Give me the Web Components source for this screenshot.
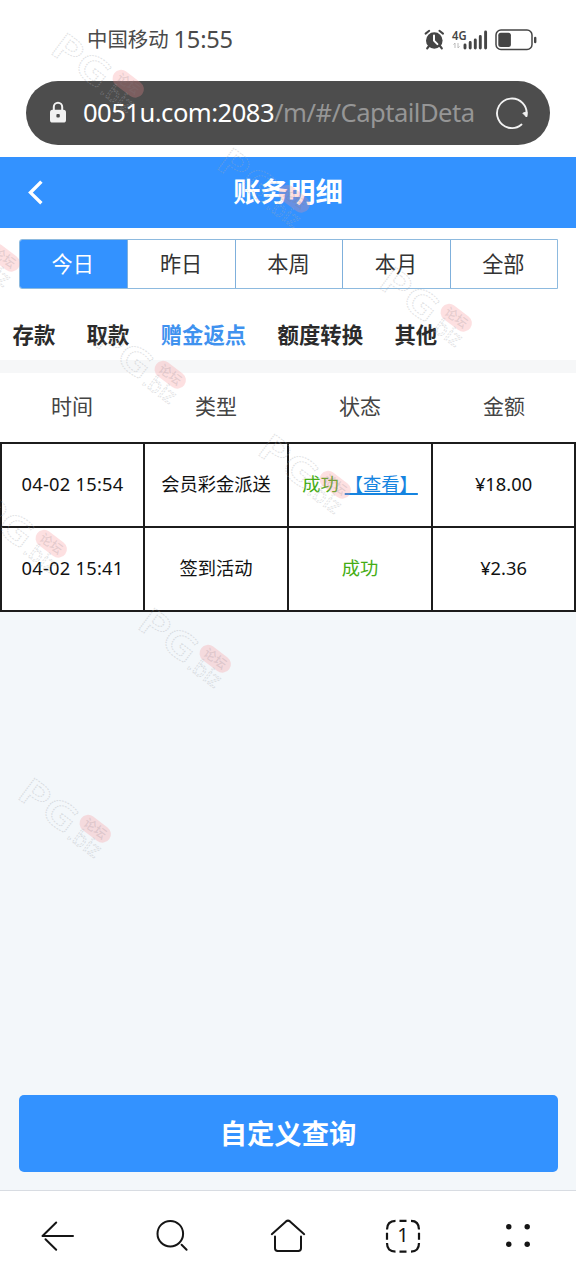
<!DOCTYPE html>
<html lang="zh-CN">
<head>
<meta charset="utf-8">
<title>账务明细</title>
<style>
html,body{margin:0;padding:0;background:#fff}
body{width:576px;height:1280px;overflow:hidden;font-family:"Noto Sans","Noto Sans CJK SC",sans-serif}
</style>
</head>
<body>
<account-page></account-page>
<script>
function define(name, html, setup) {
  const t = document.createElement('template');
  t.innerHTML = html;
  customElements.define(name, class extends HTMLElement {
    constructor() {
      super();
      this.attachShadow({ mode: 'open' }).append(t.content.cloneNode(true));
    }
    connectedCallback() { if (setup) setup(this, this.shadowRoot); }
  });
}

define('status-bar', `
<style>
:host{display:flex;height:81px;box-sizing:border-box;padding:0 39px 2px 87px;align-items:center;color:#4a4a4a;font-size:20.4px;line-height:1}
.time{font-size:23.6px;margin-left:5px;letter-spacing:-.2px}
svg{margin-left:auto;display:block}
</style>
<span>中国移动</span><span class="time">15:55</span>
<svg width="114" height="26" viewBox="423 26 114 26" fill="#454545">
  <circle cx="434.3" cy="39.5" r="8.3"/>
  <path d="M425.6 32.6l3.6-2.8M443 32.6l-3.6-2.8" stroke="#454545" stroke-width="2" stroke-linecap="round"/>
  <path d="M429 45l-1.8 2.4M440 45l1.8 2.4" stroke="#454545" stroke-width="2.2" stroke-linecap="round"/>
  <path d="M434 34.5v5.2l3.4 3.4" fill="none" stroke="#fff" stroke-width="2" stroke-linecap="round"/>
  <text x="452" y="38.5" font-size="13" font-weight="600" textLength="14.5" lengthAdjust="spacingAndGlyphs">4G</text>
  <path d="M455 47v-5l-1.5 1.6M458 42v5l1.6-1.6" fill="none" stroke="#bbb" stroke-width="1"/>
  <path d="M465 47v-3M470.2 47v-5.5M475.3 47v-8M480.3 47v-11.5M485.6 47v-16" stroke="#454545" stroke-width="2.9" stroke-linecap="round"/>
  <rect x="496" y="29" width="36" height="19.5" rx="5" fill="none" stroke="#454545" stroke-width="1.5"/>
  <rect x="498.3" y="31.7" width="12.6" height="14.4" rx="2.5"/>
  <rect x="534" y="35.7" width="2.4" height="6.5" rx="1.2"/>
</svg>`);

define('address-bar', `
<style>
:host{display:flex;align-items:center;box-sizing:border-box;margin:0 26px;height:63.5px;border-radius:32px;background:#4d4d4d;color:#fff;padding:0 21px 0 23px}
svg{display:block;flex:none}
.url{margin-left:16px;width:392px;overflow:hidden;white-space:nowrap;font-size:25.6px;line-height:40px;letter-spacing:-.52px}
.path{color:#969696}
.reload{margin-left:auto}
</style>
<svg width="18" height="23" viewBox="0 0 18 23"><rect x="1" y="8.7" width="16" height="12.8" rx="2.6" fill="#f2f2f2"/><path d="M4.8 9V6a4.2 4.2 0 0 1 8.4 0v3" fill="none" stroke="#f2f2f2" stroke-width="2"/><rect x="7.4" y="13" width="3.4" height="3.6" rx="1" fill="#4d4d4d"/></svg>
<div class="url"><span>0051u.com:2083</span><span class="path">/m/#/CaptailDeta</span></div>
<svg class="reload" width="34" height="34" viewBox="0 0 34 34"><path d="M26.5 28.5A14.8 14.8 0 1 1 31.4 20" fill="none" stroke="#f2f2f2" stroke-width="1.9" stroke-linecap="round"/><path d="M27.8 17.2l4.2-1.4-.4 5.2z" fill="#f2f2f2" stroke="#f2f2f2" stroke-linejoin="round"/></svg>`);

define('page-header', `
<style>
:host{display:grid;grid-template-columns:80px 1fr 80px;align-items:center;height:70.5px;margin-top:12.5px;background:#3392ff;color:#fff}
svg{display:block;margin-left:27px}
h1{margin:0;text-align:center;font-size:27.4px;line-height:40px;font-weight:700}
</style>
<svg width="18" height="26" viewBox="0 0 18 26"><path d="M14.4 2.6L3.5 13.6l10.9 10.7" fill="none" stroke="#fff" stroke-width="3.4"/></svg>
<h1><slot></slot></h1>`);

define('date-tab', `
<style>
:host{display:flex;flex:1;justify-content:center;align-items:center;padding:0 1px 0 0;border-left:1px solid #7fb0dc;font-size:21.2px;line-height:1;color:#333}
:host(:first-child){border-left:0;padding-right:2px}
:host([active]){background:#3392ff;color:#fff}
</style><slot></slot>`);

define('date-tabs', `
<style>
:host{display:flex;box-sizing:border-box;height:50px;margin:11px 18px 0 19px;border:1px solid #8dbadf;border-radius:3px 0 0 3px;overflow:hidden}
</style><slot></slot>`);

define('category-tab', `
<style>
:host{display:block;font-size:21.4px;line-height:30px;font-weight:700;color:#2b2b2b}
:host([active]){color:#3f92ef}
</style><slot></slot>`);

define('category-tabs', `
<style>
:host{display:flex;gap:31.3px;box-sizing:border-box;height:84px;padding:31px 0 0 12.5px;border-bottom:13px solid #f6f7f8}
</style><slot></slot>`);

define('record-table', `
<style>
:host{display:block;background:#fff}
.head{display:grid;grid-template-columns:repeat(4,1fr);box-sizing:border-box;height:69px;padding-bottom:2px;align-items:center;text-align:center;font-size:21px;color:#444;line-height:1}
</style>
<div class="head"><span>时间</span><span>类型</span><span>状态</span><span>金额</span></div>
<slot></slot>`);

define('record-row', `
<style>
:host{display:grid;grid-template-columns:143px 144px 144px 1fr;box-sizing:border-box;height:84px;border-top:2px solid #1c1c1c;font-size:18.3px;color:#111;line-height:28px}
:host(:last-child){height:86px;border-bottom:2px solid #1c1c1c}
div{display:flex;align-items:center;justify-content:center;white-space:nowrap;border-left:2px solid #1c1c1c;box-sizing:border-box;padding-bottom:1px}
div:last-child{border-right:2px solid #1c1c1c}
.num{letter-spacing:.25px}
.status{color:#45ad14}
</style>
<div class="num"><slot name="time"></slot></div>
<div><slot name="type"></slot></div>
<div class="status"><slot name="status"></slot><slot name="link"></slot></div>
<div><slot name="amount"></slot></div>`);

define('detail-link', `
<style>:host{display:block;color:#1584e0;margin-left:6px;text-decoration:underline;text-decoration-thickness:1.5px;text-underline-offset:2px}</style><slot></slot>`);

define('query-button', `
<style>
:host{display:block;margin:auto 18.5px 18px}
button{display:block;width:100%;height:77px;border:0;border-radius:5px;padding:0;background:#3392ff;color:#fff;font:700 27.3px/40px "Noto Sans","Noto Sans CJK SC",sans-serif}
</style><button><slot></slot></button>`);

define('browser-nav', `
<style>
:host{display:grid;grid-template-columns:repeat(5,1fr);box-sizing:border-box;height:90px;border-top:1px solid #d8dce2;background:#fff;align-items:center;justify-items:center}
svg{display:block;fill:none;stroke:#151515;stroke-width:2;stroke-linecap:round;stroke-linejoin:round}
</style>
<svg width="36" height="36" viewBox="0 0 36 36"><path d="M33 18H2.5L16.2 4.5M5.5 21.2l10.7 10.5"/></svg>
<svg width="36" height="36" viewBox="0 0 36 36"><circle cx="15.3" cy="15.7" r="12.8"/><path d="M26.6 26.8l5 5"/></svg>
<svg width="36" height="36" viewBox="0 0 36 36"><path d="M1.8 16.2L16 3.4q2-1.6 4 0l14.2 12.8M5 18.5v11.8q0 2.7 2.7 2.7h20.6q2.7 0 2.7-2.7V18.5"/></svg>
<svg width="36" height="36" viewBox="0 0 36 36"><path stroke-linecap="butt" stroke-width="2.2" d="M2 11.5q0-8.7 8.5-8.7M26 2.8q8 0 8 8.7M34 25q0 8.6-8 8.6M10.5 33.6Q2 33.6 2 25M14.5 2.8h7M14.5 33.6h7M2 14.8v7M34 14.8v7"/><text x="18" y="24.4" text-anchor="middle" font-size="20" fill="#151515" stroke="none">1</text></svg>
<svg width="36" height="36" viewBox="0 0 36 36"><g fill="#151515" stroke="none"><circle cx="8.8" cy="8.7" r="2.7"/><circle cx="27.2" cy="8.7" r="2.7"/><circle cx="8.8" cy="26.3" r="2.7"/><circle cx="27.2" cy="26.3" r="2.7"/></g></svg>`);

define('forum-watermark', `
<style>
:host{position:absolute;pointer-events:none;width:100px;height:80px;opacity:.65}
svg{display:block;overflow:visible}
text{font-family:"Noto Sans","Noto Sans CJK SC",sans-serif}
</style>
<svg width="100" height="80" viewBox="0 0 100 80">
  <g transform="translate(0,20) rotate(37)">
    <text x="-1" y="-2" font-size="37" font-weight="600" fill="none" stroke="#a9acb2" stroke-opacity=".55" stroke-width="1" stroke-dasharray="1.4 1" textLength="64" lengthAdjust="spacingAndGlyphs">PG</text>
    <rect x="64.5" y="-33" width="35" height="17" rx="8.5" fill="#f78f94" fill-opacity=".42"/>
    <text x="82" y="-20" text-anchor="middle" font-size="12.5" font-weight="500" fill="#9c8087" fill-opacity=".4">论坛</text>
    <text x="64" y="0" font-size="22" fill="none" stroke="#a9acb2" stroke-opacity=".55" stroke-width=".9" stroke-dasharray="2 1.2">.biz</text>
  </g>
</svg>`, el => {
  el.style.left = el.getAttribute('x') + 'px';
  el.style.top = el.getAttribute('y') + 'px';
});

define('account-page', `
<style>
:host{display:flex;flex-direction:column;position:relative;width:576px;height:1280px;overflow:hidden;background:#fff}
main{display:flex;flex-direction:column;flex:1;background:#f3f7fa}
.filters{background:#fff;overflow:hidden}
</style>
<status-bar></status-bar>
<address-bar></address-bar>
<page-header>账务明细</page-header>
<main>
  <div class="filters">
    <date-tabs><date-tab active>今日</date-tab><date-tab>昨日</date-tab><date-tab>本周</date-tab><date-tab>本月</date-tab><date-tab>全部</date-tab></date-tabs>
    <category-tabs><category-tab>存款</category-tab><category-tab>取款</category-tab><category-tab active>赠金返点</category-tab><category-tab>额度转换</category-tab><category-tab>其他</category-tab></category-tabs>
  </div>
  <record-table>
    <record-row><span slot="time">04-02 15:54</span><span slot="type">会员彩金派送</span><span slot="status">成功</span><detail-link slot="link">【查看】</detail-link><span slot="amount">¥18.00</span></record-row>
    <record-row><span slot="time">04-02 15:41</span><span slot="type">签到活动</span><span slot="status">成功</span><span slot="amount">¥2.36</span></record-row>
  </record-table>
  <query-button>自定义查询</query-button>
</main>
<browser-nav></browser-nav>
<forum-watermark x="48" y="34"></forum-watermark>
<forum-watermark x="214" y="149"></forum-watermark>
<forum-watermark x="-76" y="208"></forum-watermark>
<forum-watermark x="376" y="268"></forum-watermark>
<forum-watermark x="90" y="325"></forum-watermark>
<forum-watermark x="-29" y="494"></forum-watermark>
<forum-watermark x="255" y="435"></forum-watermark>
<forum-watermark x="135" y="609"></forum-watermark>
<forum-watermark x="15" y="779"></forum-watermark>
`);
</script>
</body>
</html>
